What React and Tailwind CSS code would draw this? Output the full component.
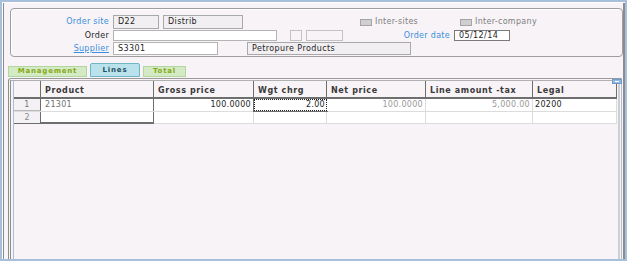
import React from "react";

const FONT = "font-['DejaVu_Sans',_Verdana,_sans-serif]";

function Box({ w, children, variant = "gray", className = "" }) {
  const styles = {
    gray: "bg-[#f1eff1] border-[#a9a9a9]",
    white: "bg-white border-[#b4b4b4]",
    dark: "bg-white border-[#7a7a7a]",
    empty: "bg-[#f7f3f7] border-[#c2c2c2]",
  };
  return (
    <div
      className={`h-full border ${styles[variant]} flex items-center pl-[4px] text-[8px] tracking-[0.4px] text-[#1e1e1e] leading-none whitespace-nowrap overflow-hidden ${className}`}
      style={{ width: w }}
    >
      {children}
    </div>
  );
}

function Label({ children, blue, underline, w = 98 }) {
  return (
    <div
      className={`shrink-0 text-right pr-[4px] text-[8px] tracking-[0.3px] leading-none whitespace-nowrap ${
        blue ? "text-[#3a8fdc]" : "text-[#1e1e1e]"
      } ${underline ? "underline" : ""}`}
      style={{ width: w + 4 }}
    >
      {children}
    </div>
  );
}

function Check({ label }) {
  return (
    <div className="flex items-center gap-[3px]">
      <div className="w-[12px] h-[7px] bg-[#cfcfcf] border border-[#a4a4a4]" />
      <span className="text-[8px] tracking-[0.3px] text-[#7e7e7e] leading-none">{label}</span>
    </div>
  );
}

const cols = [
  { name: "Product", w: 113 },
  { name: "Gross price", w: 100 },
  { name: "Wgt chrg", w: 73 },
  { name: "Net price", w: 99 },
  { name: "Line amount -tax", w: 107 },
  { name: "Legal", w: 84 },
];

export default function App() {
  return (
    <div className={`w-[634px] h-[262px] bg-white ${FONT}`}>
      <div className="w-[627px] h-[261px] border-2 border-[#a8bfdb] bg-white flex">
        <div className="relative mt-[1px] ml-[1px] flex-1 flex flex-col bg-[#f7f3f7] border-l border-r-2 border-l-[#8c8c8c] border-r-[#8c8c8c]">
          {/* header panel */}
          <div className="mt-[5px] ml-[6px] w-[613px] h-[49px] border border-[#9e9e9e] rounded-[4px] shadow-[inset_1px_1px_0_#ffffff] flex flex-col pt-[6px]">
            {/* row 1 */}
            <div className="h-[14px] flex items-center">
              <Label blue>Order site</Label>
              <Box w={46}>D22</Box>
              <Box w={80} className="ml-[4px]">Distrib</Box>
              <div className="ml-[117px] w-[100px]">
                <Check label="Inter-sites" />
              </div>
              <Check label="Inter-company" />
            </div>
            {/* row 2 */}
            <div className="h-[11px] mt-[1px] flex items-center">
              <Label>Order</Label>
              <Box w={164} variant="white" />
              <Box w={12} variant="empty" className="ml-[13px]" />
              <Box w={37} variant="empty" className="ml-[4px]" />
              <Label blue w={107}>Order date</Label>
              <Box w={56} variant="dark">05/12/14</Box>
            </div>
            {/* row 3 */}
            <div className="h-[13px] mt-[1px] flex items-center">
              <Label blue underline>Supplier</Label>
              <Box w={105} variant="white">S3301</Box>
              <Box w={164} className="ml-[29px]">Petropure Products</Box>
            </div>
          </div>

          {/* tabs */}
          <div className="mt-[6px] ml-[4px] h-[14px] flex items-end">
            <div className="w-[79px] h-[11px] bg-[#d3ebc4] border border-[#b3d59e] flex items-center justify-center text-[7px] font-bold tracking-[0.8px] text-[#86a814] leading-none">
              Management
            </div>
            <div className="ml-[3px] w-[50px] h-[14px] bg-[#b9e2ec] border border-[#6fb6c8] rounded-t-[2px] flex items-center justify-center text-[7px] font-bold tracking-[0.8px] text-[#234f5e] leading-none">
              Lines
            </div>
            <div className="ml-[3px] w-[43px] h-[11px] bg-[#d3ebc4] border border-[#b3d59e] flex items-center justify-center text-[7px] font-bold tracking-[0.8px] text-[#86a814] leading-none">
              Total
            </div>
          </div>

          {/* tab panel */}
          <div className="mt-[1px] ml-[4px] w-[614px] flex-1 border-t border-l border-r border-t-[#9a9a9a] border-l-[#8c8c8c] border-r-[#a8c0dc] rounded-tl-[3px] flex flex-col">
            <div className="mt-[1px] ml-[1px] w-[610px] flex-1 border-t border-l border-r-2 border-t-[#b0b0b0] border-l-[#8c8c8c] border-r-[#cfcfcf] flex">
              <div className="ml-[2px] flex flex-col border-l border-[#a8c0dc]">
                {/* header */}
                <div className="h-[18px] flex border-b-2 border-[#6e6e6e]">
                  <div className="w-[27px] border-r border-[#6e6e6e]" />
                  {cols.map((c) => (
                    <div
                      key={c.name}
                      className="border-r border-[#6e6e6e] flex items-center pl-[4px] pt-[3px] text-[8px] font-bold tracking-[0.6px] text-[#3a3a3a] leading-none whitespace-nowrap"
                      style={{ width: c.w }}
                    >
                      {c.name}
                    </div>
                  ))}
                </div>
                {/* row 1 */}
                <div className="h-[13px] flex border-b border-[#dcdcdc] text-[8px] leading-none tracking-[0.3px]">
                  <div className="w-[27px] border-r border-[#6e6e6e] bg-[#f3f1f3] flex items-center justify-center text-[#7a7a7a] border-b border-b-[#b8b8b8]">1</div>
                  <div className="w-[113px] border-r border-[#6e6e6e] bg-white flex items-center pl-[4px] text-[#707070]">21301</div>
                  <div className="w-[100px] border-r border-[#dcdcdc] bg-white flex items-center justify-end pr-[2px] text-[#1e1e1e]">100.0000</div>
                  <div className="w-[73px] border border-dotted border-[#202020] bg-white flex items-center justify-end pr-[1px] text-[#1e1e1e] outline outline-[#6e6e6e]">2.00</div>
                  <div className="w-[99px] border-r border-[#dcdcdc] bg-white flex items-center justify-end pr-[2px] text-[#9a9a9a]">100.0000</div>
                  <div className="w-[107px] border-r border-[#dcdcdc] bg-white flex items-center justify-end pr-[2px] text-[#9a9a9a]">5,000.00</div>
                  <div className="w-[84px] border-r border-[#dcdcdc] bg-white flex items-center pl-[2px] text-[#1e1e1e]">20200</div>
                </div>
                {/* row 2 */}
                <div className="h-[12px] flex text-[8px] leading-none">
                  <div className="w-[27px] border-r border-b border-[#6e6e6e] bg-[#f3f1f3] flex items-center justify-center text-[#8a8a8a]">2</div>
                  <div className="w-[113px] border-r border-b-2 border-[#6e6e6e] bg-white" />
                  <div className="w-[100px] border-r border-b border-[#dcdcdc] bg-white" />
                  <div className="w-[73px] border-r border-b border-[#dcdcdc] bg-white" />
                  <div className="w-[99px] border-r border-b border-[#dcdcdc] bg-white" />
                  <div className="w-[107px] border-r border-b border-[#dcdcdc] bg-white" />
                  <div className="w-[84px] border-r border-b border-[#dcdcdc] bg-white" />
                </div>
              </div>
            </div>
          </div>

          {/* small scroll widget */}
          <div className="absolute left-[608px] top-[76px] w-[10px] h-[5px] bg-[#8fb8e0] border border-[#6f9cc8] flex items-center justify-center">
            <div className="w-[4px] h-[1px] bg-white" />
          </div>
        </div>
      </div>
    </div>
  );
}
